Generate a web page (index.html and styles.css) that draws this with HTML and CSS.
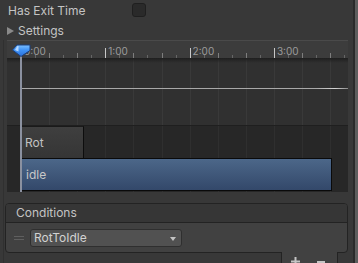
FILE: index.html
```html
<!DOCTYPE html>
<html>
<head>
<meta charset="utf-8">
<link rel="stylesheet" href="styles.css">
</head>
<body>
<div class="inspector">
  <div class="main">
    <div class="row row-exit"><span class="label">Has Exit Time</span><span class="checkbox"></span></div>
    <div class="row row-settings"><span class="tri"></span><span>Settings</span></div>
    <div class="timeline">
      <div class="ruler">
        <div class="labels"><span>0:00</span><span>1:00</span><span>2:00</span><span>3:00</span></div>
        <div class="ticks"></div>
      </div>
      <div class="tl-body">
        <div class="curve-area"><div class="curve"></div></div>
        <div class="clips">
          <div class="clip rot">Rot</div>
          <div class="clip idle">idle</div>
        </div>
      </div>
      <div class="playhead"></div>
      <svg class="handle" width="19" height="14" viewBox="0 0 19 14">
        <defs>
          <linearGradient id="hg" x1="0" y1="0" x2="0" y2="1">
            <stop offset="0" stop-color="#7cc0ff"/>
            <stop offset="0.45" stop-color="#3f92f6"/>
            <stop offset="1" stop-color="#2a6fd8"/>
          </linearGradient>
        </defs>
        <polygon points="5,1 18,1 18,6.5 9,12.5 0.5,6 " fill="url(#hg)" stroke="#1b3f7c" stroke-width="1"/>
        <polygon points="5.5,2 6.5,2 6.5,7.5 3,6" fill="#cfe6ff" opacity="0.8"/>
      </svg>
    </div>
    <div class="conditions">
      <div class="cond-header">Conditions</div>
      <div class="cond-body">
        <span class="drag"></span>
        <div class="dropdown"><span>RotToIdle</span><span class="arrow"></span></div>
      </div>
    </div>
    <div class="footer">
      <svg class="plus" width="9" height="9" viewBox="0 0 9 9"><rect x="3.5" y="0" width="2" height="9" fill="#c4c4c4"/><rect x="0" y="3.5" width="9" height="2" fill="#c4c4c4"/></svg>
      <svg class="minus" width="8" height="2" viewBox="0 0 8 2"><rect x="0" y="0" width="8" height="2" fill="#c4c4c4"/></svg>
    </div>
  </div>
  <div class="scrollbar"></div>
</div>
</body>
</html>
```
FILE: styles.css
```css
* { box-sizing: border-box; }
html, body { margin: 0; padding: 0; }
body {
  background: #383838;
  font-family: Inter, "Noto Sans", sans-serif;
  font-size: 12px;
  color: #c4c4c4;
  width: 358px;
  height: 263px;
  overflow: hidden;
}
.inspector { display: flex; height: 263px; }
.main {
  width: 353px; flex: none;
  background: linear-gradient(90deg, transparent 3px, #303030 3px 4px, transparent 4px) 0 40px / 100% 223px no-repeat;
}
.scrollbar { width: 5px; flex: none; border-left: 2px solid #2a2a2a; background: #5d5d5d; }

.row { height: 20px; padding-top: 1px; line-height: 19px; display: flex; align-items: flex-start; }
.row-exit { padding-left: 8px; }
.row-exit .label { width: 124px; flex: none; }
.checkbox {
  width: 14px; height: 14px; margin-top: 2px;
  background: #2a2a2a; border: 1px solid #1f1f1f; border-radius: 3px;
}
.row-settings { padding-left: 7px; }
.tri {
  width: 0; height: 0; margin-top: 6px; margin-right: 4px;
  border-left: 7px solid #8a8a8a;
  border-top: 4px solid transparent;
  border-bottom: 4px solid transparent;
}

.timeline { position: relative; margin-left: 7px; width: 341px; }
.ruler {
  display: grid; height: 18px;
  border-top: 1px solid #4a4a4a;
  background: #3c3c3c;
}
.ruler > * { grid-area: 1 / 1; }
.labels {
  display: flex; align-self: start;
  padding-left: 17px; padding-top: 4px;
  font-size: 10px; line-height: 12px; color: #9b9b9b;
}
.labels span { flex: none; width: 84.3px; }
.ticks {
  align-self: end; margin-left: 14px; height: 10px;
  background:
    repeating-linear-gradient(90deg, #c8c8c8 0 1px, transparent 1px 84.3px) left bottom / 100% 10px no-repeat,
    repeating-linear-gradient(90deg, #7e7e7e 0 1px, transparent 1px 28.1px) left bottom / 100% 5px no-repeat,
    repeating-linear-gradient(90deg, #666 0 1px, transparent 1px 14.05px) left bottom / 100% 3px no-repeat;
}
.curve-area {
  height: 67px; padding-top: 30px;
  background:
    linear-gradient(#1f1f1f, rgba(31,31,31,0) 5px),
    repeating-linear-gradient(90deg, transparent 0 14px, #393939 14px 15px, transparent 15px 28.1px),
    #303030;
}
.curve {
  margin-left: 14px; height: 1px;
  background: linear-gradient(90deg, #a8a8a8 0 90%, #d4d4d4 96%, #8a8a8a 100%);
}
.clips {
  height: 67px; padding-left: 14px;
  border-top: 1px solid #1f1f1f;
  background:
    repeating-linear-gradient(90deg, transparent 0 14px, #2f2f2f 14px 15px, transparent 15px 28.1px),
    #272727;
}
.clip { display: flex; align-items: center; padding-left: 4px; }
.rot {
  width: 63px; height: 32px;
  border-top: 1px solid #1a1a1a; border-right: 1px solid #0d0d0d;
  background: linear-gradient(#3f3f3f, #353535);
  color: #c2c2c2;
}
.idle {
  width: 311px; height: 33px;
  border: 1px solid #0a0a0a;
  background: linear-gradient(#4c6789, #33486a);
  color: #c8c8c8;
}
.playhead {
  position: absolute; left: 13px; top: 16px; bottom: 0; width: 2px;
  background: #8b91a0;
}
.handle { position: absolute; left: 5px; top: 4px; }

.conditions {
  margin: 11px 0 0 5px; width: 343px;
  border: 1px solid #232323; border-radius: 4px;
  background: #414141;
}
.cond-header {
  height: 19px; padding-left: 10px; line-height: 18px;
  border-bottom: 1px solid #232323;
  background: #363636;
  border-radius: 3px 3px 0 0;
}
.cond-body { height: 29px; display: flex; align-items: flex-start; padding-top: 6px; }
.drag {
  margin-left: 8px; margin-top: 7px; width: 10px; height: 4px;
  border-top: 1px solid #5f5f5f; border-bottom: 1px solid #5f5f5f;
}
.dropdown {
  display: flex; margin-left: 6px; width: 152px; height: 18px;
  border: 1px solid #2f2f2f; border-radius: 3px;
  background: #515151; padding-left: 3px; line-height: 15px;
  color: #d2d2d2;
}
.arrow {
  margin-left: auto; margin-right: 5px; margin-top: 7px;
  width: 0; height: 0;
  border-left: 3.5px solid transparent; border-right: 3.5px solid transparent;
  border-top: 4px solid #c4c4c4;
}
.footer {
  display: flex; align-items: flex-start;
  margin: -1px 0 0 281px; width: 57px; height: 20px;
  padding: 5px 0 0 9px;
  border: 1px solid #232323; border-top: none;
  border-radius: 0 0 4px 4px;
  background: #414141;
}
.minus { margin-left: 17px; margin-top: 4px; }
```
